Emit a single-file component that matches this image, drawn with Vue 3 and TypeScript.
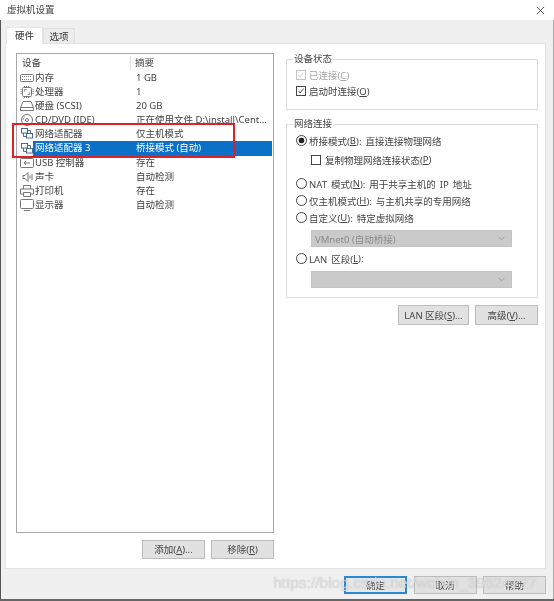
<script setup lang="ts">
interface Row { icon: string; name: string; summary: string; selected?: boolean }
const rows: Row[] = [
  { icon: 'mem', name: '内存', summary: '1 GB' },
  { icon: 'cpu', name: '处理器', summary: '1' },
  { icon: 'hdd', name: '硬盘 (SCSI)', summary: '20 GB' },
  { icon: 'cd', name: 'CD/DVD (IDE)', summary: '正在使用文件 D:\\install\\Cent...' },
  { icon: 'net', name: '网络适配器', summary: '仅主机模式' },
  { icon: 'net', name: '网络适配器 3', summary: '桥接模式 (自动)', selected: true },
  { icon: 'usb', name: 'USB 控制器', summary: '存在' },
  { icon: 'snd', name: '声卡', summary: '自动检测' },
  { icon: 'prn', name: '打印机', summary: '存在' },
  { icon: 'mon', name: '显示器', summary: '自动检测' },
]
</script>

<template>
  <div class="win">
    <div class="title">
      <span>虚拟机设置</span>
      <svg class="close" viewBox="0 0 10 10"><path d="M1 1l8 8M9 1L1 9" fill="none" stroke="#555" stroke-width="1.1" /></svg>
    </div>
    <div class="tabs">
      <div class="tab active">硬件</div>
      <div class="tab">选项</div>
    </div>
    <div class="panel">
      <div class="left">
        <div class="list">
          <div class="row head">
            <span class="hc1">设备</span>
            <span class="hc2">摘要</span>
          </div>
          <div v-for="r in rows" :key="r.name" class="row">
            <svg class="ico" viewBox="0 0 14 12" fill="none" stroke="#777" stroke-width="1">
              <template v-if="r.icon === 'mem'">
                <rect x="0.5" y="2.5" width="13" height="7" rx="1" />
                <path d="M2 4.5h10M2 7.5h10" stroke-dasharray="1 1" stroke="#888" />
              </template>
              <template v-else-if="r.icon === 'cpu'">
                <rect x="2.5" y="1.5" width="9" height="9" rx="1" />
                <path d="M1 3v6M13 3v6M4 .5h6M4 11.5h6" stroke-dasharray="1 1" />
                <path d="M4.5 5.5v-2h2M9.5 6.5v2h-2" stroke="#999" />
              </template>
              <template v-else-if="r.icon === 'hdd'">
                <path d="M3 1.5h8l2.5 6v3h-13v-3zM.5 7.5h13" />
              </template>
              <template v-else-if="r.icon === 'cd'">
                <circle cx="7" cy="6" r="5.5" />
                <circle cx="7" cy="6" r="1.5" />
                <path d="M3 6a4 4 0 0 1 2-3.4" stroke="#999" />
              </template>
              <template v-else-if="r.icon === 'net'">
                <rect x="1.5" y="0.5" width="6" height="4.5" stroke="#4a6c8e" />
                <rect x="6.5" y="5.5" width="6" height="4.5" stroke="#4a6c8e" />
                <path d="M3.5 5v3.5h3M10.5 5.5V2.5h-3" stroke="#4a6c8e" />
              </template>
              <template v-else-if="r.icon === 'usb'">
                <rect x="0.5" y="1.5" width="13" height="9" rx="1" />
                <path d="M10 6H4l2-2M4 6l2 2" />
              </template>
              <template v-else-if="r.icon === 'snd'">
                <path d="M3 4.5h2l3-3v9l-3-3H3zM10 4.5v3M12 3v6" />
              </template>
              <template v-else-if="r.icon === 'prn'">
                <path d="M3.5 4V.5h7V4M3.5 9h-3V4h13v5h-3M3.5 7.5h7v4h-7z" />
              </template>
              <template v-else>
                <rect x="0.5" y="0.5" width="13" height="9" rx="1" />
                <path d="M4 11.5h6" />
              </template>
            </svg>
            <div class="cells" :class="{ sel: r.selected }">
              <span class="c1">{{ r.name }}</span>
              <span class="c2">{{ r.summary }}</span>
            </div>
          </div>
          <div class="redbox"></div>
        </div>
        <div class="left-btns">
          <button class="btn">添加(<u>A</u>)...</button>
          <button class="btn">移除(<u>R</u>)</button>
        </div>
      </div>

      <div class="right">
        <fieldset class="group g1">
          <legend>设备状态</legend>
          <div class="opt off"><span class="check dis"><svg viewBox="0 0 10 10"><path d="M2 5l2 2.5L8 2" fill="none" stroke="#bbb" stroke-width="1" /></svg></span>已连接(<u>C</u>)</div>
          <div class="opt"><span class="check"><svg viewBox="0 0 10 10"><path d="M2 5l2 2.5L8 2" fill="none" stroke="#222" stroke-width="1" /></svg></span>启动时连接(<u>O</u>)</div>
        </fieldset>
        <fieldset class="group g2">
          <legend>网络连接</legend>
          <div class="opt"><span class="radio on"></span>桥接模式(<u>B</u>): 直接连接物理网络</div>
          <div class="opt sub"><span class="check"></span>复制物理网络连接状态(<u>P</u>)</div>
          <div class="opt nat"><span class="radio"></span>NAT 模式(<u>N</u>): 用于共享主机的 IP 地址</div>
          <div class="opt"><span class="radio"></span>仅主机模式(<u>H</u>): 与主机共享的专用网络</div>
          <div class="opt"><span class="radio"></span>自定义(<u>U</u>): 特定虚拟网络</div>
          <div class="select">VMnet0 (自动桥接)<svg viewBox="0 0 8 5"><path d="M.5.5L4 4 7.5.5" fill="none" stroke="#999" /></svg></div>
          <div class="opt lan"><span class="radio"></span>LAN 区段(<u>L</u>):</div>
          <div class="select"><svg viewBox="0 0 8 5"><path d="M.5.5L4 4 7.5.5" fill="none" stroke="#999" /></svg></div>
        </fieldset>
        <div class="right-btns">
          <button class="btn lanb">LAN 区段(<u>S</u>)...</button>
          <button class="btn">高级(<u>V</u>)...</button>
        </div>
      </div>
    </div>
    <div class="footer">
      <button class="btn ok">确定</button>
      <button class="btn">取消</button>
      <button class="btn">帮助</button>
    </div>
    <div class="mark">https://blog.csdn.net/weixin_39624227</div>
  </div>
</template>

<style scoped>
.win {
  position: relative;
  box-sizing: border-box;
  width: 554px;
  height: 601px;
  background: #f0f0f0;
  border-bottom: 2px solid #666;
  box-shadow: inset 1px 0 0 #555, inset -1px 0 0 #aaa;
  font-family: "Noto Sans", "Noto Sans CJK SC", sans-serif;
  font-size: 9.5px;
  color: #333;
  overflow: hidden;
  filter: blur(0.35px);
}
.title {
  display: flex;
  align-items: center;
  justify-content: space-between;
  height: 20px;
  padding: 0 9px 0 7px;
  box-sizing: border-box;
  background: #fff;
  line-height: 14px;
  color: #444;
}
.close {
  width: 9px;
  height: 9px;
}
.tabs {
  display: flex;
  height: 23px;
  padding: 7px 0 0 6px;
  box-sizing: border-box;
  align-items: flex-end;
}
.tab {
  width: 32px;
  height: 15px;
  line-height: 15px;
  text-align: center;
  background: #ececec;
  border: 1px solid #e0e0e0;
  border-bottom: none;
  box-sizing: border-box;
}
.tab.active {
  width: 37px;
  height: 17px;
  background: #fff;
  border-color: #e4e4e4;
  margin-bottom: -1px;
  position: relative;
}
.panel {
  display: flex;
  box-sizing: border-box;
  width: 541px;
  height: 526px;
  margin-left: 5px;
  padding: 9px 8px 0 10px;
  background: #fff;
  border: 1px solid #e4e4e4;
  gap: 12px;
}
.left {
  width: 258px;
  flex: none;
}
.list {
  position: relative;
  box-sizing: border-box;
  height: 480px;
  border: 1px solid #a8a8a8;
  padding-top: 1px;
  background: #fff;
}
.row {
  display: flex;
  align-items: center;
  height: 14.1px;
  line-height: 14px;
}
.row.head {
  height: 16px;
}
.hc1 {
  width: 114px;
  padding-left: 5px;
  box-sizing: border-box;
  border-right: 1px solid #e4e4e4;
  color: #444;
}
.hc2 {
  padding-left: 4px;
  color: #444;
}
.ico {
  position: relative;
  z-index: 1;
  width: 14px;
  height: 12px;
  margin-left: 3px;
  flex: none;
}
.cells {
  display: flex;
  flex: 1;
  height: 14.1px;
  margin-left: -1px;
  margin-right: 1px;
}
.sel {
  background: #0a70c8;
  color: #fff;
}
.c1 {
  width: 103px;
  box-sizing: border-box;
  white-space: nowrap;
  flex: none;
  color: #444;
  padding-left: 2px;
}
.c2 {
  white-space: nowrap;
  color: #444;
}
.sel .c1,
.sel .c2 {
  color: #fff;
}
.redbox {
  position: absolute;
  left: -5px;
  top: 69px;
  width: 219px;
  height: 31px;
  border: 2px solid #e02028;
  z-index: 2;
  pointer-events: none;
}
.left-btns {
  display: flex;
  justify-content: flex-end;
  gap: 6px;
  margin-top: 7px;
}
.btn {
  box-sizing: border-box;
  width: 63px;
  height: 19px;
  padding: 0;
  font: inherit;
  color: #444;
  background: #e1e1e1;
  border: 1px solid #bdbdbd;
  line-height: 15px;
}
.right {
  width: 252px;
  flex: none;
}
.group {
  box-sizing: border-box;
  margin: 0;
  padding: 0 0 0 9px;
  border: 1px solid #dcdcdc;
  min-width: 0;
}
.group legend {
  padding: 0 1px;
  margin-left: -3px;
  line-height: 12px;
  color: #444;
}
.g1 {
  height: 57px;
  padding-top: 2px;
}
.g2 {
  height: 180px;
  margin-top: 8px;
  padding-top: 2px;
}
.opt {
  display: flex;
  align-items: center;
  height: 17px;
  white-space: pre;
  word-spacing: 1.5px;
  color: #444;
}
.g1 .opt {
  height: 16px;
}
.opt.off {
  color: #a6a6a6;
}
.opt.sub {
  margin-top: 2px;
  padding-left: 15px;
}
.opt.sub .check {
  margin-right: 4px;
}
.opt.nat {
  margin-top: 7px;
}
.opt.lan {
  margin-top: 3px;
}
.check {
  box-sizing: border-box;
  width: 10px;
  height: 10px;
  border: 1px solid #444;
  margin-right: 3px;
  background: #fff;
  flex: none;
  display: flex;
}
.check svg {
  width: 100%;
  height: 100%;
}
.check.dis {
  border-color: #c4c4c4;
}
.radio {
  box-sizing: border-box;
  width: 11px;
  height: 11px;
  border: 1px solid #444;
  border-radius: 50%;
  margin-right: 2px;
  flex: none;
  background: #fff;
}
.radio.on {
  background: radial-gradient(circle, #222 0 2.6px, #fff 3.2px);
}
.select {
  box-sizing: border-box;
  display: flex;
  align-items: center;
  justify-content: space-between;
  width: 201px;
  height: 17px;
  margin: 4px 0 0 15px;
  padding: 0 6px 0 3px;
  background: #cacaca;
  color: #8a8a8a;
  border: 1px solid #c4c4c4;
}
.select svg {
  width: 7px;
  height: 5px;
  margin-left: auto;
}
.right-btns {
  display: flex;
  justify-content: flex-end;
  gap: 6px;
  margin: 7px 0 0 0;
}
.right-btns .btn {
  height: 20px;
}
.lanb {
  width: 71px !important;
}
.footer {
  display: flex;
  justify-content: flex-end;
  gap: 6.5px;
  padding: 7px 8px 0 0;
}
.footer .btn {
  width: 63px;
  height: 18px;
}
.btn.ok {
  border: 2px solid #2b87d8;
  background: #e6e6e6;
}
.mark {
  position: absolute;
  left: 273px;
  top: 574px;
  font-family: "Liberation Sans", sans-serif;
  font-size: 15.5px;
  line-height: 18px;
  white-space: nowrap;
  color: rgba(255, 255, 255, 0.65);
  text-shadow: 0 0 1px rgba(120, 120, 120, 0.7);
  pointer-events: none;
}
</style>
